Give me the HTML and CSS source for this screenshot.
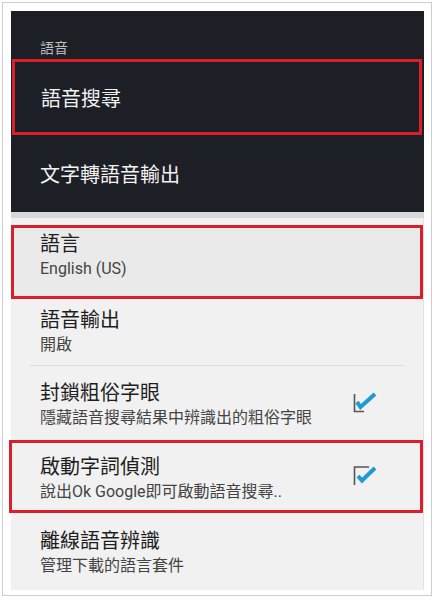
FILE: index.html
```html
<!DOCTYPE html>
<html lang="zh-Hant">
<head>
  <meta charset="UTF-8" />
  <meta name="viewport" content="width=device-width, initial-scale=1.0" />
  <title>語音設定</title>
  <link rel="stylesheet" href="styles.css">
</head>
<body>
  <div class="frame">
    <div class="dark">
      <div class="dark-header">語音</div>
      <div class="dark-row mark first">語音搜尋</div>
      <div class="dark-row second">文字轉語音輸出</div>
    </div>
    <div class="strip"></div>
    <div class="light">
      <div class="item mark lang">
        <div>
          <div class="title">語言</div>
          <div class="sub">English (US)</div>
        </div>
      </div>
      <div class="item output">
        <div>
          <div class="title">語音輸出</div>
          <div class="sub">開啟</div>
        </div>
      </div>
      <div class="divider"></div>
      <div class="item block">
        <div>
          <div class="title">封鎖粗俗字眼</div>
          <div class="sub">隱藏語音搜尋結果中辨識出的粗俗字眼</div>
        </div>
        <svg class="check" width="26" height="22" viewBox="0 0 26 22">
          <path d="M1.5 2 V19.5 H11" fill="none" stroke="#555" stroke-width="1.6"/>
          <path d="M4 10 L7.5 15 L22 2" fill="none" stroke="#1f9ad4" stroke-width="4"/>
        </svg>
      </div>
      <div class="item mark hotword">
        <div>
          <div class="title">啟動字詞偵測</div>
          <div class="sub">說出Ok Google即可啟動語音搜尋..</div>
        </div>
        <svg class="check two" width="26" height="22" viewBox="0 0 26 22">
          <path d="M1.5 20 V2 H16" fill="none" stroke="#555" stroke-width="1.6"/>
          <path d="M5 11 L9 15.5 L22 3" fill="none" stroke="#1f9ad4" stroke-width="4"/>
        </svg>
      </div>
      <div class="item offline">
        <div>
          <div class="title">離線語音辨識</div>
          <div class="sub">管理下載的語言套件</div>
        </div>
      </div>
    </div>
  </div>
</body>
</html>
```

FILE: styles.css
```css
* {
  box-sizing: border-box;
  font-family: 'Noto Sans CJK TC', 'Roboto', sans-serif;
}
body {
  margin: 0;
  background: #fff;
}
.frame {
  margin: 2px 3px 4px 2px;
  border: 1px solid #cdcdcd;
  padding: 8px 7px 5px 8px;
  width: 430px;
}
.dark {
  background: #1d1f26;
  height: 201px;
}
.dark-header {
  color: #bdbdbd;
  font-size: 14px;
  line-height: 20px;
  padding: 26px 0 2px 29px;
}
.dark-row {
  color: #f2f2f2;
  font-size: 20px;
  line-height: 26px;
  padding-left: 29px;
}
.mark {
  border: 3px solid #d81f2a;
}
.dark-row.first {
  margin: 0 2px 0 1px;
  padding: 23px 0 18px 26px;
  height: 76px;
}
.dark-row.second {
  padding-top: 26px;
}
.strip {
  height: 6px;
  background: #d7d8da;
}
.light {
  background: #f1f1f1;
  padding-top: 7px;
  height: 372px;
  border-right: 1px solid #e2e2e2;
}
.item {
  display: flex;
  justify-content: space-between;
  align-items: center;
  padding-left: 29px;
  padding-right: 44px;
}
.title {
  font-size: 20px;
  line-height: 26px;
  color: #1e1e1e;
}
.sub {
  font-size: 16px;
  line-height: 26px;
  color: #444;
}
.sub, .lang .sub {
  font-family: 'Roboto', 'Noto Sans CJK TC', sans-serif;
}
.item.mark {
  padding-left: 26px;
  padding-right: 41px;
}
.lang {
  background: #eaeaea;
  height: 74px;
  padding-top: 2px;
  padding-bottom: 14px;
}
.output {
  height: 66px;
  padding-top: 7px;
  padding-bottom: 7px;
}
.divider {
  height: 1px;
  background: #dcdcdc;
  margin: 0 19px;
}
.block {
  height: 74px;
  padding-top: 13px;
  padding-bottom: 9px;
}
.hotword {
  height: 73px;
  padding-top: 10px;
  padding-bottom: 5px;
  margin-left: -2px;
}
.hotword.mark {
  padding-left: 28px;
}
.offline {
  height: 77px;
  padding-top: 14px;
  padding-bottom: 11px;
}
.check {
  margin-top: -4px;
}
.check.two {
  margin-top: -6px;
}
```
